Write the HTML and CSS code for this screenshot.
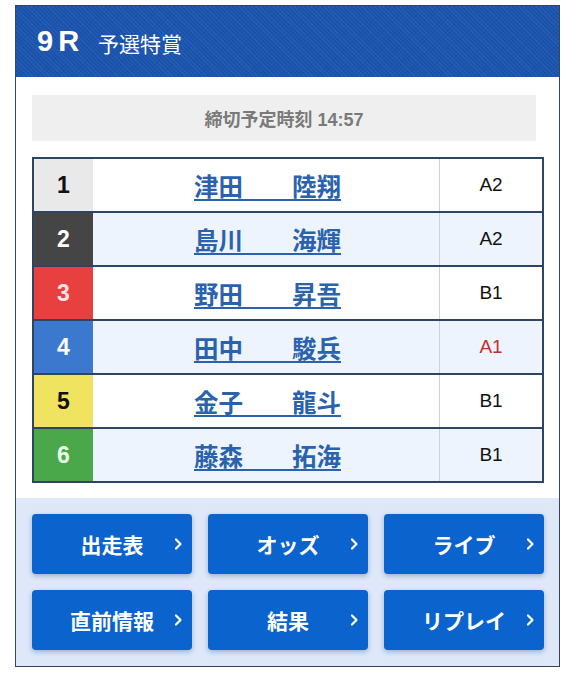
FILE: index.html
```html
<!DOCTYPE html>
<html lang="ja">

<head>
    <meta charset="UTF-8">
    <meta name="viewport" content="width=device-width, initial-scale=1.0">
    <title>9R 予選特賞</title>

    <link rel="stylesheet" href="styles.css">

</head>

<body>
    <div class="race">

        <!-- レース名 -->
        <div class="race-head">
            <span class="race-no">9R</span>
            <span class="race-name">予選特賞</span>
        </div>

        <div class="race-body">
            <div class="deadline">締切予定時刻 14:57</div>

            <!-- 出走選手 -->
            <div class="entries">
                <div class="entry">
                    <div class="waku waku1">1</div>
                    <div class="player"><a href="#">津田　　陸翔</a></div>
                    <div class="grade">A2</div>
                </div>
                <div class="entry">
                    <div class="waku waku2">2</div>
                    <div class="player"><a href="#">島川　　海輝</a></div>
                    <div class="grade">A2</div>
                </div>
                <div class="entry">
                    <div class="waku waku3">3</div>
                    <div class="player"><a href="#">野田　　昇吾</a></div>
                    <div class="grade">B1</div>
                </div>
                <div class="entry">
                    <div class="waku waku4">4</div>
                    <div class="player"><a href="#">田中　　駿兵</a></div>
                    <div class="grade grade-a1">A1</div>
                </div>
                <div class="entry">
                    <div class="waku waku5">5</div>
                    <div class="player"><a href="#">金子　　龍斗</a></div>
                    <div class="grade">B1</div>
                </div>
                <div class="entry">
                    <div class="waku waku6">6</div>
                    <div class="player"><a href="#">藤森　　拓海</a></div>
                    <div class="grade">B1</div>
                </div>
            </div>
        </div>

        <!-- メニュー -->
        <div class="race-menu">
            <a class="menu-btn" href="#">出走表<svg class="arrow" viewBox="0 0 10 14"><path d="M3 2.5 L7.5 7 L3 11.5" /></svg></a>
            <a class="menu-btn" href="#">オッズ<svg class="arrow" viewBox="0 0 10 14"><path d="M3 2.5 L7.5 7 L3 11.5" /></svg></a>
            <a class="menu-btn" href="#">ライブ<svg class="arrow" viewBox="0 0 10 14"><path d="M3 2.5 L7.5 7 L3 11.5" /></svg></a>
            <a class="menu-btn" href="#">直前情報<svg class="arrow" viewBox="0 0 10 14"><path d="M3 2.5 L7.5 7 L3 11.5" /></svg></a>
            <a class="menu-btn" href="#">結果<svg class="arrow" viewBox="0 0 10 14"><path d="M3 2.5 L7.5 7 L3 11.5" /></svg></a>
            <a class="menu-btn" href="#">リプレイ<svg class="arrow" viewBox="0 0 10 14"><path d="M3 2.5 L7.5 7 L3 11.5" /></svg></a>
        </div>
    </div>
</body>

</html>
```

FILE: styles.css
```css
body {
    margin: 0;
    background-color: #fff;
    font-family: "Liberation Sans", "Noto Sans CJK JP", sans-serif;
    color: #111;
}

.race {
    width: 543px;
    margin: 5px 0 0 15px;
    border: 1px solid #34465e;
}

.race-head {
    display: flex;
    align-items: center;
    height: 71px;
    padding-left: 21px;
    color: #fff;
    background-color: #1b54ae;
    background-image: repeating-linear-gradient(45deg, rgba(255, 255, 255, 0.05) 0 1px, transparent 1px 3px),
        repeating-linear-gradient(-45deg, rgba(0, 0, 0, 0.05) 0 1px, transparent 1px 3px);
}

.race-no {
    font-size: 29px;
    font-weight: bold;
    letter-spacing: 5px;
    margin-right: 14px;
}

.race-name {
    font-size: 21px;
    padding-top: 2px;
}

.race-body {
    padding: 18px 15px 15px 16px;
}

.deadline {
    height: 46px;
    margin-right: 8px;
    display: flex;
    align-items: center;
    justify-content: center;
    background-color: #efefef;
    color: #7a7a7a;
    font-size: 18px;
    font-weight: bold;
}

.entries {
    margin-top: 16px;
    border: 2px solid #2d4462;
}

.entry {
    display: grid;
    grid-template-columns: 59px 1fr 103px;
    height: 52px;
    border-bottom: 2px solid #2d4462;
    background-color: #fff;
}

.entry:nth-child(even) {
    background-color: #edf4fd;
}

.entry:last-child {
    border-bottom: none;
}

.waku {
    display: flex;
    align-items: center;
    justify-content: center;
    font-size: 23px;
    font-weight: bold;
}

.waku1 { background-color: #e9e9e9; color: #111; }
.waku2 { background-color: #454545; color: #fff; }
.waku3 { background-color: #e8403f; color: #ffe4e4; }
.waku4 { background-color: #3b79cf; color: #fff; }
.waku5 { background-color: #efe35f; color: #111; }
.waku6 { background-color: #4aa84a; color: #eaffea; }

.player {
    display: flex;
    align-items: center;
    justify-content: center;
    padding-left: 3px;
}

.player a {
    font-family: "Noto Sans CJK JP", sans-serif;
    font-size: 24.5px;
    font-weight: bold;
    color: #2b62ad;
    text-decoration: underline;
    text-decoration-thickness: 1.5px;
    text-underline-offset: 3px;
}

.grade {
    display: flex;
    align-items: center;
    justify-content: center;
    border-left: 1px solid #c9d2de;
    font-size: 19px;
}

.grade-a1 {
    color: #c0302c;
}

.race-menu {
    display: grid;
    grid-template-columns: repeat(3, 1fr);
    gap: 16px;
    padding: 16px 15px 16px 16px;
    background-color: #dee8f9;
}

.menu-btn {
    position: relative;
    display: flex;
    align-items: center;
    justify-content: center;
    height: 60px;
    border-radius: 4px;
    background-color: #0b63ce;
    box-shadow: 0 2px 5px rgba(10, 40, 110, 0.3);
    color: #fff;
    font-family: "Noto Sans CJK JP", sans-serif;
    font-size: 21px;
    font-weight: bold;
    text-decoration: none;
}

.arrow {
    position: absolute;
    right: 9px;
    top: 23px;
    width: 10px;
    height: 14px;
    fill: none;
    stroke: #fff;
    stroke-width: 2.2;
    stroke-linecap: round;
    stroke-linejoin: round;
}
```
